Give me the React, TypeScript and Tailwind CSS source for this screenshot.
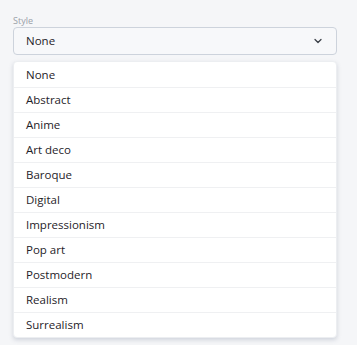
import { ChevronDown } from "lucide-react";

const styles = [
  "None",
  "Abstract",
  "Anime",
  "Art deco",
  "Baroque",
  "Digital",
  "Impressionism",
  "Pop art",
  "Postmodern",
  "Realism",
  "Surrealism",
];

export default function App() {
  return (
    <div
      className="min-h-[345px] bg-[#f5f6f8] pl-[13px] pt-[15px] text-[#1f2329]"
      style={{ fontFamily: '"Open Sans", "Noto Sans", sans-serif' }}
    >
      <div className="w-[324px]">
        <div className="text-[9px] leading-[12px] text-[#9aa0a8]">Style</div>

        <button
          type="button"
          className="flex h-[28px] w-full items-center justify-between rounded-[4px] border border-[#cdd3dc] bg-[#f7f8fa] pl-[12px] pr-[12px] text-[11.5px]"
        >
          <span>None</span>
          <ChevronDown size={12} strokeWidth={2.5} className="text-[#3a3f46]" />
        </button>

        <div className="mt-[6px] overflow-hidden rounded-[4px] border border-[#eceef1] bg-white shadow-[0_2px_4px_rgba(100,110,140,0.25)]">
          {styles.map((name, index) => (
            <div
              key={name}
              className={
                index === 0
                  ? "flex h-[25px] items-center pl-[12px] text-[11.5px]"
                  : "flex h-[25px] items-center border-t border-[#eff0f2] pl-[12px] text-[11.5px]"
              }
            >
              {name}
            </div>
          ))}
        </div>
      </div>
    </div>
  );
}
